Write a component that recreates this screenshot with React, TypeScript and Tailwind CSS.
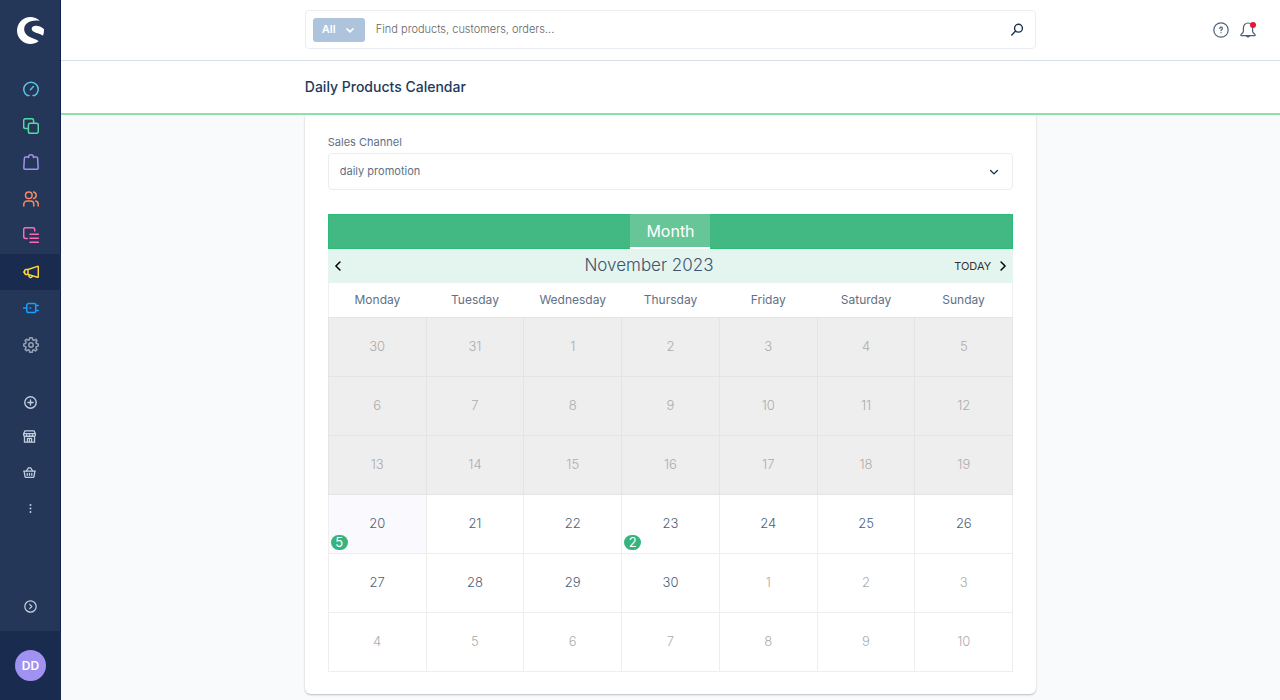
import React from "react";
import clsx from "clsx";
import { SiShopware } from "react-icons/si";

interface IconProps {
  className?: string;
  size?: number;
  strokeWidth?: number;
  children: React.ReactNode;
}

function Icon({ className, size = 16, strokeWidth = 1.5, children }: IconProps) {
  return (
    <svg
      viewBox="0 0 16 16"
      width={size}
      height={size}
      fill="none"
      stroke="currentColor"
      strokeWidth={strokeWidth}
      strokeLinecap="round"
      strokeLinejoin="round"
      className={className}
      aria-hidden="true"
    >
      {children}
    </svg>
  );
}

const navItems = [
  {
    label: "Dashboard",
    color: "text-[#5ac4e0]",
    icon: (
      <>
        <path d="M6 14.6H4.4A7.2 7.2 0 1 1 11.6 14.6H10" />
        <path d="M7.4 8.8 10.4 5.6" />
      </>
    ),
  },
  {
    label: "Catalogues",
    color: "text-[#57d9a3]",
    icon: (
      <>
        <rect x="5.4" y="5.2" width="9.9" height="10" rx="1.8" />
        <path d="M5.2 10.6H2.5A1.8 1.8 0 0 1 .7 8.8V2.5A1.8 1.8 0 0 1 2.5.7H8.8A1.8 1.8 0 0 1 10.6 2.5V5" />
      </>
    ),
  },
  {
    label: "Orders",
    color: "text-[#a092f0]",
    icon: (
      <path d="M5.6 3.6V2.8A2.4 2 0 0 1 10.4 2.8V3.6M5 3.1H2.4Q1.5 3.1 1.4 4L.8 14Q.8 15.2 1.9 15.2H14.1Q15.2 15.2 15.2 14L14.6 4Q14.5 3.1 13.6 3.1H11" />
    ),
  },
  {
    label: "Customers",
    color: "text-[#f88962]",
    icon: (
      <>
        <circle cx="5.8" cy="4.3" r="3.3" />
        <path d="M.8 15V13.2A3.2 3.2 0 0 1 4 10H7.6A3.2 3.2 0 0 1 10.8 13.2V15M10.6 1A3.4 3.4 0 0 1 10.6 7.6M12.7 10.1A3.2 3.2 0 0 1 15.2 13.2V15" />
      </>
    ),
  },
  {
    label: "Content",
    color: "text-[#ff68b4]",
    icon: (
      <>
        <path d="M4.2 11.4H2.5A1.8 1.8 0 0 1 .7 9.6V2.5A1.8 1.8 0 0 1 2.5.7H9.9A1.8 1.8 0 0 1 11.7 2.5V4" />
        <path d="M7 7.2H15.3M7 11.2H15.3M7 15.2H15.3" />
      </>
    ),
  },
  {
    label: "Marketing",
    color: "text-[#ffd53d]",
    active: true,
    icon: (
      <>
        <path d="M5 5.5 14.4 2.4Q15.3 2.2 15.3 3V12.6Q15.3 13.5 14.4 13.2L5 10.4ZM5 5.5H2.6L1.6 6.6V9.4L2.6 10.4H5M.6 8H1.4" />
        <path d="M6 10.8V12.2A1.6 1.6 0 0 0 8.9 12.9L9.4 11.8" />
      </>
    ),
  },
  {
    label: "Extensions",
    color: "text-[#189eff]",
    icon: (
      <>
        <path d="M5.7 3.4H11.2A1.5 1.5 0 0 1 12.7 4.9V11.1A1.5 1.5 0 0 1 11.2 12.6H5.7A1.9 1.9 0 0 1 3.8 10.7V5.3A1.9 1.9 0 0 1 5.7 3.4Z" />
        <path d="M.6 8H3.6M12.9 5.6H15.2M12.9 10.4H15.2" />
        <path d="M7 8H7.6" />
      </>
    ),
  },
  {
    label: "Settings",
    color: "text-[#98a3b5]",
    icon: (
      <>
        <circle cx="8" cy="8" r="2.2" />
        <path d="M6.8.8H9.2L9.7 2.8 11 3.3 12.8 2.3 14 3.8 12.9 5.3 13.4 6.5 15.2 6.9V9.1L13.4 9.6 12.9 10.8 13.9 12.4 12.5 13.9 10.9 12.8 9.7 13.3 9.2 15.2H6.8L6.3 13.3 5.1 12.8 3.5 13.8 2.1 12.4 3.1 10.8 2.6 9.6.8 9.1V6.9L2.6 6.5 3.1 5.2 2.1 3.6 3.5 2.2 5.1 3.2 6.3 2.8Z" />
      </>
    ),
  },
];

const shortcuts = [
  {
    label: "Storefront",
    className: "pr-[3px]",
    icon: (
      <>
        <path d="M2.4 1H13.6L15.2 4.6V6A1.8 1.8 0 0 1 11.6 6 1.8 1.8 0 0 1 8 6 1.8 1.8 0 0 1 4.4 6 1.8 1.8 0 0 1 .8 6V4.6ZM1 4.5H15" />
        <path d="M1.8 8V15H14.2V8M5.4 15V10.4H10.6V15M8 10.5V15" />
      </>
    ),
  },
  {
    label: "Headless",
    className: "pr-[3px]",
    icon: (
      <>
        <path d="M.8 6.2H15.2M1.4 6.4 2.4 12.8Q2.6 14 3.8 14H12.2Q13.4 14 13.6 12.8L14.6 6.4" />
        <path d="M4.4 6 6.4 2.4H9.6L11.6 6M5.2 9V11.4M8 9V11.4M10.8 9V11.4" />
      </>
    ),
  },
  {
    label: "More",
    className: "",
    icon: <path strokeWidth={2.8} d="M8 3V3M8 8V8M8 13V13" />,
  },
];

const weekdays = [
  "Monday",
  "Tuesday",
  "Wednesday",
  "Thursday",
  "Friday",
  "Saturday",
  "Sunday",
];

const weeks = [
  [30, 31, 1, 2, 3, 4, 5],
  [6, 7, 8, 9, 10, 11, 12],
  [13, 14, 15, 16, 17, 18, 19],
  [20, 21, 22, 23, 24, 25, 26],
  [27, 28, 29, 30, 1, 2, 3],
  [4, 5, 6, 7, 8, 9, 10],
];

const TODAY_INDEX = 21;
const LAST_INDEX = 31;

// number of products per cell
const eventCounts: Record<number, number> = { 21: 5, 24: 2 };

function Sidebar() {
  return (
    <aside className="flex w-[61px] shrink-0 flex-col bg-[#243758] shadow-[-1px_0_0_#142250_inset]">
      <div className="flex h-[71px] justify-center pt-[17px]">
        <SiShopware className="size-[27px] text-white" />
      </div>
      <nav className="grid h-[292px] grid-rows-8">
        {navItems.map((item) => (
          <a
            key={item.label}
            href="#"
            aria-label={item.label}
            className={clsx(
              "flex items-center justify-center",
              item.color,
              item.active && "bg-[#1a2b50]"
            )}
          >
            <Icon>{item.icon}</Icon>
          </a>
        ))}
      </nav>
      <div className="mt-6 flex flex-col text-[#c3cfe0]">
        <button
          type="button"
          aria-label="Add sales channel"
          className="flex h-[31px] items-center justify-center"
        >
          <Icon size={13} strokeWidth={1.7}>
            <circle cx="8" cy="8" r="7" />
            <path d="M8 4.8V11.2M4.8 8H11.2" />
          </Icon>
        </button>
        {shortcuts.map((item) => (
          <button
            key={item.label}
            type="button"
            aria-label={item.label}
            className={clsx("flex h-9 items-center justify-center", item.className)}
          >
            <Icon size={item.className ? 13 : 11} strokeWidth={1.6}>
              {item.icon}
            </Icon>
          </button>
        ))}
      </div>
      <button
        type="button"
        aria-label="Collapse menu"
        className="mt-auto flex h-[50px] items-center justify-center text-[#c3cfe0]"
      >
        <Icon size={13} strokeWidth={1.5}>
          <circle cx="8" cy="8" r="7" />
          <path d="M7 5.4 9.6 8 7 10.6" />
        </Icon>
      </button>
      <div className="flex h-[69px] items-center justify-center bg-[#1a2b50]">
        <button
          type="button"
          className="size-[31px] rounded-full bg-[#a092f0] text-xs font-semibold text-white"
        >
          DD
        </button>
      </div>
    </aside>
  );
}

function TopBar() {
  return (
    <header className="grid h-[61px] grid-cols-[1fr_60%_1fr] items-center border-b border-[#d6dfe8] bg-white pb-px">
      <div className="col-start-2 flex h-[39px] items-center rounded-sm border border-[#e9edf1] px-[7px]">
        <div className="relative">
          <select
            aria-label="Search in"
            className="block h-6 w-[52px] appearance-none rounded-[3px] bg-[#aec4dd] pl-[9px] text-[11px] font-semibold text-white"
          >
            <option>All</option>
          </select>
          <Icon
            size={10}
            strokeWidth={2.6}
            className="pointer-events-none absolute top-[7px] right-[10px] text-white"
          >
            <path d="M3 6 8 11 13 6" />
          </Icon>
        </div>
        <input
          type="search"
          aria-label="Search"
          placeholder="Find products, customers, orders..."
          className="ml-[11px] min-w-0 flex-1 text-[11px] font-light text-[#52667a] outline-none placeholder:text-[#666]"
        />
        <button type="button" aria-label="Search" className="mr-1 text-[#1d3150]">
          <Icon size={14} strokeWidth={1.6}>
            <circle cx="9.7" cy="5.9" r="4.5" />
            <path d="M6.4 9.2 2 13.6" />
          </Icon>
        </button>
      </div>
      <div className="mr-6 flex items-center justify-end gap-[11px] text-[#4d6078]">
        <button type="button" aria-label="Help">
          <Icon strokeWidth={1.2}>
            <circle cx="8" cy="8" r="7.2" />
            <path d="M6.8 6.5A1.3 1.3 0 1 1 8.6 7.7Q8 8 8 8.7M8 10.6V10.7" />
          </Icon>
        </button>
        <button type="button" aria-label="Notifications" className="relative">
          <Icon strokeWidth={1.2}>
            <path d="M3.4 6A4.6 5 0 0 1 12.6 6V9.4Q12.8 10.9 14.6 11.9 15.4 12.6 15 13.6H1Q.6 12.6 1.4 11.9 3.2 10.9 3.4 9.4ZM6.6 14.2A1.6 1.4 0 0 0 9.4 14.2" />
          </Icon>
          <span className="absolute top-0 right-0 size-[6px] rounded-full bg-[#e5183a]" />
        </button>
      </div>
    </header>
  );
}

function Calendar() {
  return (
    <section className="mt-6 text-[#4d6078]">
      <div className="flex h-[35px] justify-center border border-[#2dba77] bg-[#42b983]">
        <button
          type="button"
          className="-my-px w-20 border-b-2 border-white bg-[#67c698] text-base text-white"
        >
          Month
        </button>
      </div>
      <div className="flex h-[34px] items-center bg-[#e4f5ef] px-1">
        <button type="button" aria-label="Previous month" className="text-black">
          <Icon size={12} strokeWidth={2}>
            <path d="M10.6 2.6 5.2 8 10.6 13.4" />
          </Icon>
        </button>
        <h2 className="flex-1 text-center text-[17px] font-light text-[#3f5270]">
          November 2023
        </h2>
        <div className="flex items-center gap-[6px] text-[#333]">
          <button type="button" className="text-[11px]">
            TODAY
          </button>
          <button type="button" aria-label="Next month" className="text-black">
            <Icon size={12} strokeWidth={2}>
              <path d="M5.4 2.6 10.8 8 5.4 13.4" />
            </Icon>
          </button>
        </div>
      </div>
      <table className="w-full table-fixed border-collapse text-center text-[13px] font-light">
        <thead>
          <tr className="h-[34px] border-x border-[#f0f0f0]">
            {weekdays.map((day) => (
              <th key={day} scope="col" className="p-0 text-xs font-normal text-[#5f7086]">
                {day}
              </th>
            ))}
          </tr>
        </thead>
        <tbody>
          {weeks.map((week, row) => (
            <tr key={row} className="h-[59px]">
              {week.map((date, col) => {
                const index = row * 7 + col;
                const past = index < TODAY_INDEX;
                return (
                  <td
                    key={col}
                    className={clsx(
                      "relative border p-0",
                      past ? "border-[#e4e4e4] bg-[#eeeeee]" : "border-[#eeeeee]",
                      index === TODAY_INDEX && "bg-[#f9f9fe]",
                      (past || index > LAST_INDEX) && "text-[#acacac]"
                    )}
                  >
                    {date}
                    {eventCounts[index] && (
                      <span className="absolute bottom-[3px] left-[2px] h-[15px] w-[17px] rounded-full bg-[#36b37e] text-[13px] leading-[15px] font-normal text-white">
                        {eventCounts[index]}
                      </span>
                    )}
                  </td>
                );
              })}
            </tr>
          ))}
        </tbody>
      </table>
    </section>
  );
}

export default function App() {
  return (
    <div className="flex min-h-screen bg-[#f9fafc] font-['Inter',sans-serif] text-[#4d6078]">
      <Sidebar />
      <div className="flex min-w-0 flex-1 flex-col">
        <TopBar />
        <div className="grid h-[54px] grid-cols-[1fr_60%_1fr] items-center border-b-2 border-[#8be3a5] bg-white">
          <h1 className="col-start-2 text-sm font-medium text-[#1d3a5c]">
            Daily Products Calendar
          </h1>
        </div>
        <main className="grid grid-cols-[1fr_60%_1fr]">
          <div className="col-start-2 rounded-b-md bg-white px-[23px] pt-5 pb-[22px] shadow-[0_1px_2px_rgba(0,0,0,0.25)]">
            <label
              htmlFor="sales-channel"
              className="block text-[11px] leading-[14px] text-[#5f7086]"
            >
              Sales Channel
            </label>
            <div className="relative mt-1">
              <select
                id="sales-channel"
                className="block h-[37px] w-full appearance-none rounded-sm border border-[#eaecef] bg-white px-[11px] text-[11px] text-[#5f7086]"
              >
                <option>daily promotion</option>
              </select>
              <Icon
                size={10}
                strokeWidth={2.2}
                className="pointer-events-none absolute top-[14px] right-[14px] text-[#1d3150]"
              >
                <path d="M2.6 5.6 8 11 13.4 5.6" />
              </Icon>
            </div>
            <Calendar />
          </div>
        </main>
      </div>
    </div>
  );
}
